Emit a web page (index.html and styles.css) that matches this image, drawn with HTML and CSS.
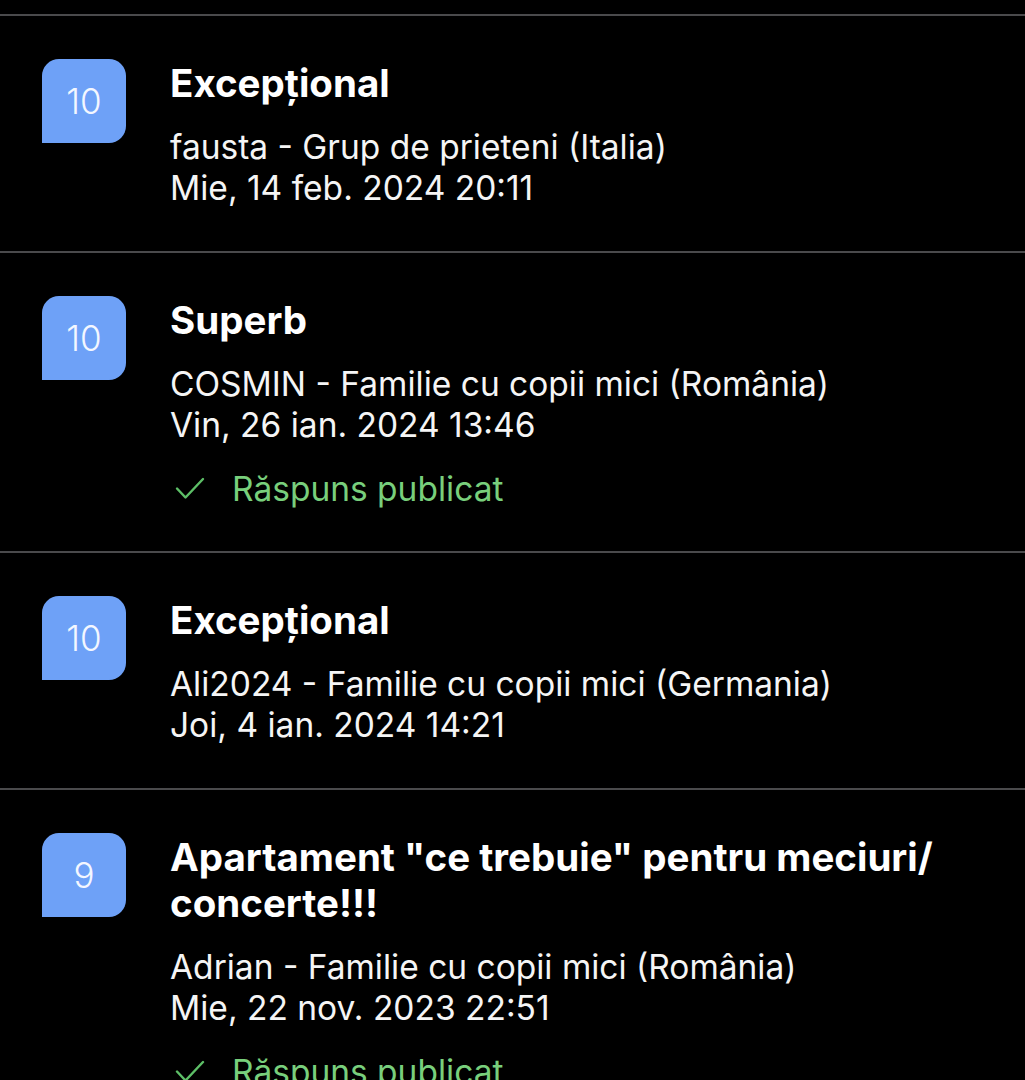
FILE: index.html
```html
<!DOCTYPE html>
<html lang="ro">
<head>
<meta charset="utf-8">
<link rel="stylesheet" href="styles.css">
</head>
<body>
<div class="top"></div>
<div class="review">
  <div class="score">10</div>
  <div class="body">
    <div class="title">Excepțional</div>
    <div class="meta">fausta - Grup de prieteni (Italia)</div>
    <div class="meta">Mie, 14 feb. 2024 20:11</div>
  </div>
</div>
<div class="review">
  <div class="score">10</div>
  <div class="body">
    <div class="title">Superb</div>
    <div class="meta">COSMIN - Familie cu copii mici (România)</div>
    <div class="meta">Vin, 26 ian. 2024 13:46</div>
    <div class="reply"><svg class="check" viewBox="0 0 32 24" width="32" height="24"><path d="M3 11.5 L11.5 20.5 L29 2" fill="none" stroke="currentColor" stroke-width="2.4" stroke-linecap="round" stroke-linejoin="round"/></svg><span>Răspuns publicat</span></div>
  </div>
</div>
<div class="review">
  <div class="score">10</div>
  <div class="body">
    <div class="title">Excepțional</div>
    <div class="meta">Ali2024 - Familie cu copii mici (Germania)</div>
    <div class="meta">Joi, 4 ian. 2024 14:21</div>
  </div>
</div>
<div class="review">
  <div class="score">9</div>
  <div class="body">
    <div class="title">Apartament "ce trebuie" pentru meciuri/<br>concerte!!!</div>
    <div class="meta">Adrian - Familie cu copii mici (România)</div>
    <div class="meta">Mie, 22 nov. 2023 22:51</div>
    <div class="reply"><svg class="check" viewBox="0 0 32 24" width="32" height="24"><path d="M3 11.5 L11.5 20.5 L29 2" fill="none" stroke="currentColor" stroke-width="2.4" stroke-linecap="round" stroke-linejoin="round"/></svg><span>Răspuns publicat</span></div>
  </div>
</div>
</body>
</html>
```

FILE: styles.css
```css
html, body {
  margin: 0;
  padding: 0;
  background: #000;
}
body {
  font-family: Inter, "Noto Sans", "Liberation Sans", sans-serif;
  color: #fff;
  width: 1025px;
  height: 1080px;
  overflow: hidden;
}
.top {
  height: 14px;
  border-bottom: 2px solid #4a4a4c;
}
.review {
  display: flex;
  align-items: flex-start;
  gap: 44px;
  padding: 44px 0 42px 42px;
  border-bottom: 2px solid #4a4a4c;
}
.score {
  flex: none;
  width: 84px;
  height: 84px;
  background: #6ea1f7;
  border-radius: 17px 17px 17px 0;
  display: flex;
  align-items: center;
  justify-content: center;
  font-size: 35px;
  color: #f4f7ff;
  font-weight: 300;
  margin-top: -1px;
}
.body {
  display: flex;
  flex-direction: column;
}
.title {
  font-size: 38.5px;
  font-weight: 700;
  line-height: 46px;
  margin-bottom: 21px;
}
.meta {
  font-size: 33.5px;
  line-height: 41px;
  color: #f5f5f5;
}
.reply {
  display: flex;
  align-items: center;
  gap: 26px;
  margin-top: 22px;
  height: 41px;
  font-size: 33.5px;
  color: #78cf7c;
}
.check {
  color: #5dbf67;
  margin-left: 4px;
}
```
